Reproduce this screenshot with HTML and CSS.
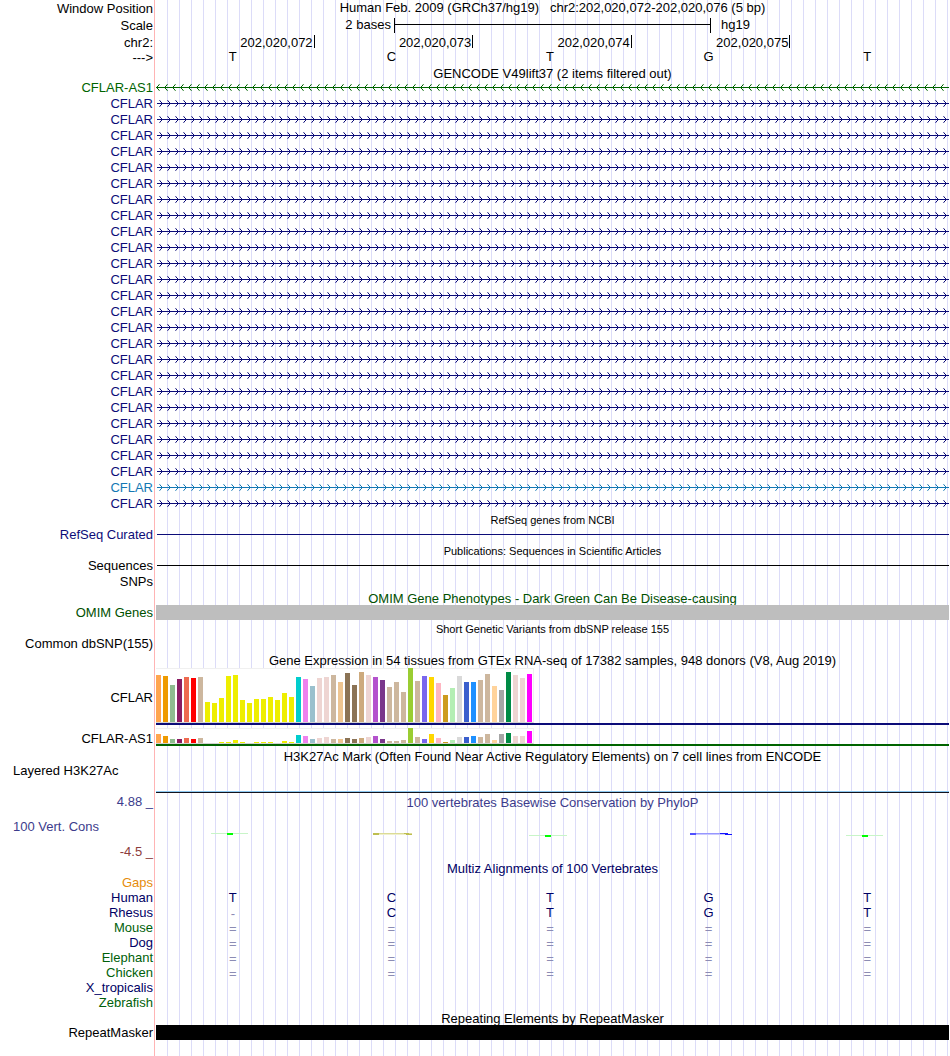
FILE: index.html
```
<!DOCTYPE html>
<html lang="en">
<head>
    <meta charset="UTF-8">
    <meta name="viewport" content="width=device-width, initial-scale=1.0">
    <title>chr2:202,020,072-202,020,076 - Genome Browser</title>
    <link rel="stylesheet" href="styles.css">
</head>
<body>
    <!-- Strand arrow patterns shared by all gene rows -->
    <svg class="defs" width="0" height="0" aria-hidden="true">
        <defs>
            <g id="head">
                <path d="M4 5h1v1h1v1h1v1h-1v1h-1v1h-1v-1h1v-1h1v-1h-1v-1h-1z"/>
                <path d="M3 4h1v1h-1zM3 10h1v1h-1z" opacity="0.6"/>
                <path d="M4 4h1v1h-1zM4 10h1v1h-1z" opacity="0.2"/>
            </g>
            <pattern id="arrowMinus" width="8" height="16" patternUnits="userSpaceOnUse">
                <use href="#head" fill="#006400" transform="translate(7 0) scale(-1 1)"/>
            </pattern>
            <pattern id="arrowPlus" width="8" height="16" patternUnits="userSpaceOnUse">
                <use href="#head" fill="#0c0c78"/>
            </pattern>
            <pattern id="arrowAlt" width="8" height="16" patternUnits="userSpaceOnUse">
                <use href="#head" fill="#1478b4"/>
            </pattern>
        </defs>
    </svg>

    <main class="tracks">
        <!-- Position ruler -->
        <div class="row ruler">
            <div class="label">Window Position</div>
            <div class="plot position">Human Feb. 2009 (GRCh37/hg19)&nbsp;&nbsp; chr2:202,020,072-202,020,076 (5 bp)</div>
        </div>
        <div class="row ruler">
            <div class="label">Scale</div>
            <div class="plot scale">
                <span class="scale-size">2 bases</span>
                <span class="scale-bar"></span>
                <span class="scale-db">hg19</span>
            </div>
        </div>
        <div class="row coords">
            <div class="label">chr2:</div>
            <div class="plot bases">
                <span class="tick">202,020,072</span>
                <span class="tick">202,020,073</span>
                <span class="tick">202,020,074</span>
                <span class="tick">202,020,075</span>
            </div>
        </div>
        <div class="row sequence">
            <div class="label">---&gt;</div>
            <div class="plot bases">
                <span class="base">T</span><span class="base">C</span><span class="base">T</span><span class="base">G</span><span class="base">T</span>
            </div>
        </div>

        <!-- GENCODE -->
        <h2 class="title">GENCODE V49lift37 (2 items filtered out)</h2>
        <div id="genes">
            <!-- Gene rows are added by the script -->
        </div>

        <!-- RefSeq -->
        <h2 class="title small">RefSeq genes from NCBI</h2>
        <div class="row navy">
            <div class="label">RefSeq Curated</div>
            <div class="plot line"></div>
        </div>

        <!-- Publications -->
        <h2 class="title small">Publications: Sequences in Scientific Articles</h2>
        <div class="row">
            <div class="label">Sequences</div>
            <div class="plot line"></div>
        </div>
        <div class="row">
            <div class="label">SNPs</div>
            <div class="plot"></div>
        </div>

        <!-- OMIM -->
        <h2 class="title omim">OMIM Gene Phenotypes - Dark Green Can Be Disease-causing</h2>
        <div class="row short omim">
            <div class="label">OMIM Genes</div>
            <div class="plot block gray"></div>
        </div>

        <!-- dbSNP -->
        <h2 class="title small dbsnp">Short Genetic Variants from dbSNP release 155</h2>
        <div class="row">
            <div class="label">Common dbSNP(155)</div>
            <div class="plot"></div>
        </div>

        <!-- GTEx -->
        <h2 class="title gtex">Gene Expression in 54 tissues from GTEx RNA-seq of 17382 samples, 948 donors (V8, Aug 2019)</h2>
        <div class="row expression">
            <div class="label">CFLAR</div>
            <div class="plot model-navy">
                <div class="chart tall" id="chartCflar"></div>
            </div>
        </div>
        <div class="row expression">
            <div class="label">CFLAR-AS1</div>
            <div class="plot model-green">
                <div class="chart" id="chartCflarAs1"></div>
            </div>
        </div>

        <!-- H3K27Ac -->
        <h2 class="title">H3K27Ac Mark (Often Found Near Active Regulatory Elements) on 7 cell lines from ENCODE</h2>
        <div class="row layered">
            <div class="label left">Layered H3K27Ac</div>
            <div class="plot signal"></div>
        </div>

        <!-- Conservation -->
        <div class="row cons">
            <div class="label cons-labels">
                <span>4.88 _</span>
                <span class="cons-name">100 Vert. Cons</span>
                <span class="cons-min">-4.5 _</span>
            </div>
            <div class="plot">
                <h2 class="cons-title">100 vertebrates Basewise Conservation by PhyloP</h2>
                <div class="bases logos">
                    <svg width="46" height="4"><path d="M1 0H38V1H1Z" fill="#c8f5c8"/><path d="M17 0H23V2H17Z" fill="#00ff00"/></svg>
                    <svg width="46" height="4"><path d="M5 0H44V1H5Z" fill="#dcdc96"/><path d="M5 1H44V2H5Z" fill="#f0f0cd"/><path d="M5 0H11V2H5ZM36 0H41V1H36ZM38 1H44V2H38Z" fill="#bebe50"/></svg>
                    <svg width="46" height="4"><path d="M2 2H40V3H2Z" fill="#c8f5c8"/><path d="M18 2H24V4H18Z" fill="#00ff00"/></svg>
                    <svg width="46" height="4"><path d="M4 0H42V1H4Z" fill="#9696ff"/><path d="M4 1H46V2H4Z" fill="#c8c8ff"/><path d="M4 0H10V2H4Z" fill="#5050ff"/><path d="M34 0H42V1H34ZM39 1H46V2H39Z" fill="#1414ff"/></svg>
                    <svg width="46" height="4"><path d="M2 2H39V3H2Z" fill="#c8f5c8"/><path d="M18 2H24V4H18Z" fill="#00ff00"/></svg>
                </div>
            </div>
        </div>

        <!-- Multiz -->
        <h2 class="title multiz">Multiz Alignments of 100 Vertebrates</h2>
        <div id="alignments">
            <!-- Species rows are added by the script -->
        </div>

        <!-- RepeatMasker -->
        <h2 class="title">Repeating Elements by RepeatMasker</h2>
        <div class="row short">
            <div class="label">RepeatMasker</div>
            <div class="plot block"></div>
        </div>
    </main>

    <script src="script.js"></script>
</body>
</html>
```

FILE: styles.css
```
* {
    margin: 0;
    padding: 0;
    box-sizing: border-box;
}

body {
    font-family: "Liberation Sans", Arial, Helvetica, sans-serif;
    font-size: 13px;
    line-height: 15px;
    background: #fff;
    color: #000;
}

.defs {
    position: absolute;
}

/* Pink edge of the label column and the vertical guide lines */
.tracks {
    min-height: 100vh;
    padding-right: 1px;
    background:
        linear-gradient(#ffb4b4, #ffb4b4) 154px 0 / 1px 100% no-repeat,
        repeating-linear-gradient(to right, transparent 0 11px, #dcdcf8 11px 12px) 156px 0 no-repeat;
}

.row {
    display: flex;
    height: 16px;
}

.row.short {
    height: 15px;
}

.label {
    flex: none;
    width: 156px;
    padding-right: 3px;
    text-align: right;
    white-space: nowrap;
}

.label.left {
    padding-left: 13px;
    text-align: left;
}

.plot {
    flex: 1;
    min-width: 0;
}

.title {
    height: 15px;
    margin-left: 156px;
    padding-top: 1px;
    font-size: 13px;
    font-weight: normal;
    text-align: center;
    white-space: nowrap;
}

.title.small {
    font-size: 11px;
}

.title.dbsnp {
    height: 16px;
    padding-top: 2px;
}

.title.gtex {
    height: 16px;
}

/* Ruler */
.row.ruler {
    height: 17px;
}

.row.ruler .label,
.row.coords .label,
.row.sequence .label {
    padding-top: 1px;
}

.row.coords {
    height: 15px;
}

.position {
    text-align: center;
}

.scale {
    display: grid;
    grid-template-columns: 3fr 4fr 3fr;
}

.scale-size {
    padding-right: 3px;
    text-align: right;
}

.scale-bar {
    height: 15px;
    margin-top: 1px;
    border: solid #000;
    border-width: 0 1px;
    background: linear-gradient(#000, #000) 0 6px / 100% 1px no-repeat;
}

.scale-db {
    padding-left: 10px;
}

.bases {
    display: grid;
    grid-template-columns: repeat(5, 1fr);
}

.tick {
    height: 13px;
    margin-top: 1px;
    padding-right: 1px;
    border-right: 1px solid #000;
    text-align: right;
}

.base {
    padding-right: 5px;
    text-align: center;
}

/* Genes */
.gene {
    color: #0c0c78;
}

.gene.minus {
    color: #006400;
}

.gene.alt {
    color: #1478b4;
}

.gene svg {
    display: block;
    width: 100%;
    height: 16px;
}

.navy {
    color: #0c0c78;
}

.line {
    height: 1px;
    margin: 7px 0 0 1px;
    background: currentColor;
}

.block {
    background: #000;
}

.block.gray {
    background: #bebebe;
}

.omim {
    color: #005000;
}

/* Expression charts */
.row.expression {
    height: auto;
    align-items: center;
    margin-bottom: 3px;
}

.row.expression .label {
    padding-top: 2px;
}

.row.expression + .title {
    margin-top: -1px;
}

.chart {
    display: flex;
    align-items: flex-end;
    gap: 2px;
    width: 378px;
    height: 16px;
    border-bottom: 1px solid #d2d2d2;
    background: linear-gradient(#f0f0f0, #f0f0f0) 0 0 / 100% 1px no-repeat, #fff;
    border-right: 1px solid #f0f0f0;
}

.chart.tall {
    height: 55px;
}

.bar {
    flex: none;
    width: 5px;
}

.model-navy {
    border-bottom: 2px solid #0c0c78;
}

.model-green {
    border-bottom: 2px solid #006400;
}

/* H3K27Ac signal */
.row.layered {
    height: 30px;
}

.signal {
    border-bottom: 1px solid #14141e;
    background: linear-gradient(#8cc8f0, #8cc8f0) 0 100% / 100% 1px no-repeat;
}

/* Conservation */
.row.cons {
    height: 67px;
    padding-top: 1px;
    color: #3c3c8c;
}

.cons-labels {
    display: flex;
    flex-direction: column;
    gap: 10px;
}

.cons-name {
    padding-left: 13px;
    text-align: left;
}

.cons-min {
    color: #8c3c3c;
}

.cons-title {
    margin-top: 1px;
    font-size: 13px;
    font-weight: normal;
    text-align: center;
}

.logos {
    margin-top: 23px;
    justify-items: center;
}

.logos svg {
    margin-right: 5px;
}

/* Alignments */
.multiz,
.species {
    color: #000064;
}

.species.green .label {
    color: #005f0a;
}

.species.gaps .label {
    color: #e68c0a;
}

.base.gap {
    padding-top: 1px;
    color: #8c8cb4;
}
```

FILE: script.js
```
const GENE_COUNT = 26;
const ALT_GENE = 25;

const tissueColors = [
    '#ffa54f', '#ee9a00', '#8fbc8f', '#8b1c62', '#ee6a50', '#ff0000', '#cdb79e',
    ...Array(13).fill('#eeee00'),
    '#00cdcd', '#ee82ee', '#9ac0cd', '#eed5d2', '#eed5d2', '#cdb79e', '#eec591',
    '#8b7355', '#8b7355', '#cdaa7d', '#eed5d2', '#b452cd', '#7a378b', '#cdb79e',
    '#cdb79e', '#cdb79e', '#9acd32', '#cdb79e', '#7a67ee', '#ffd700', '#ffb6c1',
    '#cd9b1d', '#b4eeb4', '#d9d9d9', '#3a5fcd', '#1e90ff', '#cdb79e', '#cdb79e',
    '#ffd39b', '#a6a6a6', '#008b45', '#eed5d2', '#eed5d2', '#ff00ff'
];

const cflar = [
    47, 46, 37, 43, 45, 44, 45, 20, 19, 24, 46, 47, 22, 19, 23, 23, 25, 22,
    29, 25, 45, 43, 36, 44, 45, 47, 40, 49, 37, 50, 47, 45, 42, 35, 40, 30,
    54, 41, 46, 45, 39, 27, 34, 46, 40, 40, 42, 48, 36, 32, 50, 47, 44, 48
];

const cflarAs1 = [
    9, 7, 4, 4, 5, 4, 5, 0, 0, 1, 1, 3, 1, 0, 1, 1, 1, 0,
    2, 1, 8, 7, 4, 5, 6, 4, 4, 5, 4, 5, 6, 7, 4, 2, 2, 3,
    15, 6, 4, 9, 5, 1, 3, 6, 6, 7, 6, 9, 3, 9, 10, 7, 7, 12
];

const species = [
    { name: 'Gaps', type: 'gaps', bases: '' },
    { name: 'Human', type: '', bases: 'TCTGT' },
    { name: 'Rhesus', type: '', bases: '-CTGT' },
    { name: 'Mouse', type: 'green', bases: '=====' },
    { name: 'Dog', type: '', bases: '=====' },
    { name: 'Elephant', type: 'green', bases: '=====' },
    { name: 'Chicken', type: 'green', bases: '=====' },
    { name: 'X_tropicalis', type: '', bases: '' },
    { name: 'Zebrafish', type: 'green', bases: '' }
];

function geneRow(name, type, pattern) {
    return `
        <div class="row gene ${type}">
            <div class="label">${name}</div>
            <div class="plot">
                <svg>
                    <rect width="100%" height="16" fill="url(#${pattern})"/>
                    <rect x="1" y="7" width="100%" height="1" fill="currentColor"/>
                </svg>
            </div>
        </div>
    `;
}

function loadGenes() {
    let rows = geneRow('CFLAR-AS1', 'minus', 'arrowMinus');
    for (let i = 1; i <= GENE_COUNT; i++) {
        rows += i === ALT_GENE
            ? geneRow('CFLAR', 'alt', 'arrowAlt')
            : geneRow('CFLAR', '', 'arrowPlus');
    }
    document.getElementById('genes').innerHTML = rows;
}

function loadChart(id, values) {
    document.getElementById(id).innerHTML = values.map((value, i) =>
        `<span class="bar" style="height: ${value}px; background: ${tissueColors[i]}"></span>`
    ).join('');
}

function loadAlignments() {
    document.getElementById('alignments').innerHTML = species.map(s => `
        <div class="row short species ${s.type}">
            <div class="label">${s.name}</div>
            <div class="plot bases">
                ${[...s.bases].map(b => `<span class="base ${/[-=]/.test(b) ? 'gap' : ''}">${b}</span>`).join('')}
            </div>
        </div>
    `).join('');
}

loadGenes();
loadChart('chartCflar', cflar);
loadChart('chartCflarAs1', cflarAs1);
loadAlignments();
```
